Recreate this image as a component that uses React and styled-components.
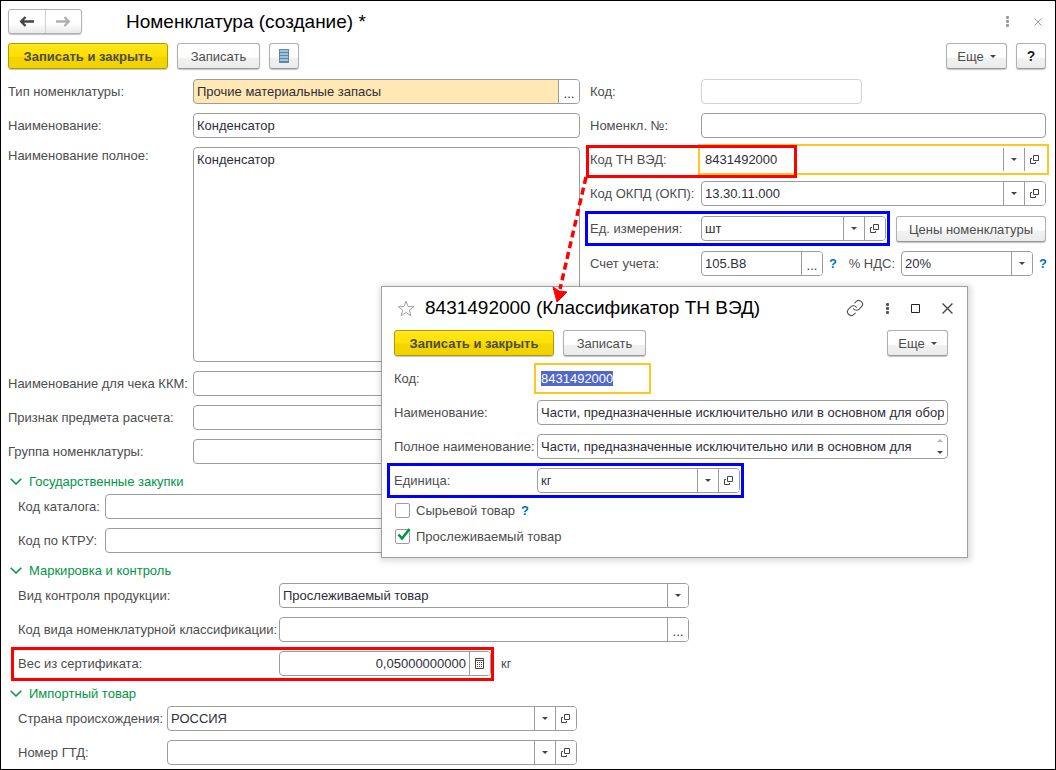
import React, { useEffect, useRef } from 'react';
import styled, { createGlobalStyle, css } from 'styled-components';
import { Link } from 'lucide-react';

const GlobalStyle = createGlobalStyle`
    * {
        box-sizing: border-box;
    }
    body {
        margin: 0;
        background: #fff;
        color: #4d4d4d;
        font-family: 'Liberation Sans', Arial, sans-serif;
        font-size: 13px;
        line-height: 15px;
    }
    button, input, textarea {
        font: inherit;
        color: inherit;
    }
`

/* icons */

const ArrowIcon = ({color, flip}) => (
    <svg width="16" height="13" viewBox="0 0 16 13">
        <path
            d="M2 6.500h13M6.500 2L2.200 6.500l4.300 4.500"
            fill="none"
            stroke={color}
            strokeWidth="2.400"
            transform={flip ? 'translate(16 0) scale(-1 1)' : undefined}
        />
    </svg>
)

const CaretIcon = () => (
    <svg width="6" height="3" viewBox="0 0 6 3"><path d="M0 0h6L3 3z" fill="#444" /></svg>
)

const OpenIcon = () => (
    <svg width="10" height="9" viewBox="0 0 10 9" fill="none" stroke="#444">
        <path d="M3.500 0.500h5v5h-5zM2 3.500H0.500v5h5V7" />
    </svg>
)

const CalcIcon = () => (
    <svg width="10" height="11" viewBox="0 0 10 11">
        <path d="M0.500 0.500h8v10h-8zM0.500 2.500h8" fill="none" stroke="#444" />
        <path d="M2 4h1v1H2zM4 4h1v1H4zM6 4h1v1H6zM2 6h1v1H2zM4 6h1v1H4zM6 6h1v1H6zM2 8h1v1H2zM4 8h1v1H4zM6 8h1v1H6z" fill="#444" />
    </svg>
)

const ListIcon = () => (
    <svg width="10" height="14" viewBox="0 0 10 14">
        <rect width="10" height="14" fill="#5b89ab" />
        <path d="M1 2h8M1 5h8M1 8h8M1 11h8" stroke="#b9d3e5" strokeWidth="1.600" />
    </svg>
)

const DotsIcon = ({color}) => (
    <svg width="3" height="11" viewBox="0 0 3 11" fill={color}>
        <rect width="3" height="3" rx="1" /><rect y="4" width="3" height="3" rx="1" /><rect y="8" width="3" height="3" rx="1" />
    </svg>
)

const CrossIcon = ({size, color}) => (
    <svg width={size} height={size} viewBox="0 0 10 10"><path d="M0.500 0.500l9 9M9.500 0.500l-9 9" stroke={color} strokeWidth="1.200" /></svg>
)

const SquareIcon = () => (
    <svg width="9" height="9" viewBox="0 0 9 9"><path d="M0.500 0.500h8v8h-8z" fill="none" stroke="#222" /></svg>
)

const StarIcon = () => (
    <svg width="18" height="17" viewBox="0 0 18 17">
        <path d="M9 1.200l2 5.300 5.800.2-4.500 3.500 1.600 5.500L9 12.500l-4.900 3.200 1.600-5.500L1.200 6.700 7 6.500z" fill="none" stroke="#a0a0a0" />
    </svg>
)

const ChevronIcon = () => (
    <svg width="12" height="7" viewBox="0 0 12 7"><path d="M0.700 0.700L6 6l5.300-5.300" fill="none" stroke="#009646" strokeWidth="1.500" /></svg>
)

/* controls */

const Button = styled.button`
    display: flex;
    align-items: center;
    justify-content: center;
    flex: none;
    height: 26px;
    width: ${p => p.$width}px;
    padding: 0;
    gap: 6px;
    border: 1px solid #b0b0b0;
    border-bottom-color: #999;
    border-radius: 3px;
    background: linear-gradient(#fff 0%, #fff 55%, #f1f1f1 60%, #ebebeb 100%);
    box-shadow: 0 1px 1px #c4c4c4;
    ${p => p.$primary && css`
        border-color: #b09a00;
        background: linear-gradient(#ffe61c 0%, #ffe000 50%, #f2d500 55%, #f0d200 100%);
        font-weight: bold;
    `}
    ${p => p.$strong && css`
        color: #222;
        font-size: 14px;
        font-weight: bold;
    `}
`

const Frame = styled.div`
    display: flex;
    flex: ${p => p.$width ? 'none' : '1'};
    width: ${p => p.$width ? p.$width + 'px' : 'auto'};
    min-width: 0;
    height: 25px;
    overflow: hidden;
    border: 1px solid ${p => p.$dim ? '#d2d2d2' : '#9c9c9c'};
    border-radius: 4px;
    background: ${p => p.$filled ? '#ffe8b3' : '#fff'};
    color: #2e2e3a;
    ${p => p.$focused && css`
        border-color: #fff;
        border-radius: 0;
        outline: 2px solid #fcc720;
        outline-offset: 1px;
    `}
`

const Input = styled.input`
    flex: 1;
    min-width: 0;
    padding: 0 3px;
    border: 0;
    outline: 0;
    background: transparent;
    text-align: ${p => p.$right ? 'right' : 'left'};
    &::selection {
        background: #5068c8;
        color: #fff;
    }
`

const CellButton = styled.button`
    display: flex;
    align-items: center;
    justify-content: center;
    flex: none;
    width: 21px;
    padding: 0;
    border: 0;
    border-left: 1px solid #9c9c9c;
    background: #fff;
    span {
        padding-top: 4px;
    }
`

const Area = styled.textarea`
    display: block;
    flex: 1;
    min-width: 0;
    height: ${p => p.$height}px;
    padding: 4px 3px;
    border: 1px solid #9c9c9c;
    border-radius: 4px;
    outline: 0;
    resize: none;
    color: #2e2e3a;
`

const LineArea = styled.textarea`
    flex: 1;
    min-width: 0;
    height: 23px;
    padding: 0 3px;
    border: 0;
    outline: 0;
    resize: none;
    overflow: hidden;
    background: transparent;
    line-height: 23px;
`

const Spin = styled.div`
    display: flex;
    flex-direction: column;
    align-items: center;
    justify-content: space-around;
    width: 15px;
    button {
        display: flex;
        padding: 0;
        border: 0;
        background: none;
    }
    button:first-child {
        opacity: 0.4;
        transform: rotate(180deg);
    }
`

const Row = styled.div`
    display: flex;
    align-items: ${p => p.$align || 'center'};
    gap: ${p => p.$gap || 0}px;
`

const Label = styled.label`
    flex: none;
    width: ${p => p.$width ? p.$width + 'px' : 'auto'};
    padding-top: ${p => p.$top || 0}px;
    align-self: ${p => p.$top ? 'flex-start' : 'center'};
    white-space: nowrap;
`

const Help = styled.button`
    flex: none;
    width: 7px;
    padding: 0;
    border: 0;
    background: none;
    color: #0070ba;
    font-weight: bold;
`

/* coloured frame drawn over a row */
const Mark = styled.div`
    position: relative;
    display: flex;
    align-items: center;
    &::after {
        content: '';
        position: absolute;
        inset: ${p => p.$inset};
        border: 3px solid ${p => p.$color};
        pointer-events: none;
    }
`

const Field = ({id, value = '', width, cells = [], right, inputRef, ...look}) => (
    <Frame $width={width} $filled={look.filled} $dim={look.dim} $focused={look.focused}>
        <Input id={id} defaultValue={value} $right={right} ref={inputRef} />
        {cells.map(cell => (
            <CellButton key={cell} type="button" aria-label={cell}>
                {cell === 'list' && <CaretIcon />}
                {cell === 'open' && <OpenIcon />}
                {cell === 'calc' && <CalcIcon />}
                {cell === 'more' && <span>...</span>}
            </CellButton>
        ))}
    </Frame>
)

/* page parts */

const Page = styled.div`
    position: relative;
    min-height: 100vh;
    padding: 8px 9px 4px 7px;
    border: 1px solid #000;
    background: #fff;
`

const Header = styled.header`
    display: flex;
    align-items: center;
    height: 25px;
    padding-right: 4px;
`

const Nav = styled.div`
    display: flex;
    width: 74px;
    height: 25px;
    margin-right: 44px;
    border: 1px solid #b0b0b0;
    border-radius: 3px;
    background: linear-gradient(#fff 55%, #eaeaea 100%);
    box-shadow: 0 1px 1px #c4c4c4;
    button {
        display: flex;
        flex: 1;
        align-items: center;
        justify-content: center;
        padding: 0;
        border: 0;
        background: none;
    }
    button + button {
        border-left: 1px solid #d0d0d0;
    }
`

const Title = styled.h1`
    flex: 1;
    margin: 0;
    color: #000;
    font-size: 19px;
    font-weight: normal;
    line-height: 24px;
    white-space: nowrap;
`

const WindowButtons = styled.div`
    display: flex;
    align-items: center;
    gap: ${p => p.$gap}px;
    button {
        display: flex;
        padding: 0;
        border: 0;
        background: none;
    }
`

const Toolbar = styled.div`
    display: flex;
    gap: 9px;
    margin-top: 9px;
`

const Spacer = styled.div`
    flex: 1;
`

const Columns = styled.div`
    display: grid;
    grid-template-columns: 572fr 456fr;
    column-gap: 10px;
    margin-top: 10px;
`

const Stack = styled.div`
    display: flex;
    flex-direction: column;
    gap: 9px;
    padding-left: ${p => p.$indent || 0}px;
`

const UnitRows = styled(Stack)`
    padding-top: 1px;
`

const Group = styled.section`
    h2 {
        display: flex;
        align-items: center;
        gap: 7px;
        height: 30px;
        margin: 0;
        padding: 4px 0 0 2px;
        color: #009646;
        font-size: 13px;
        font-weight: normal;
    }
`

const Dialog = styled.section`
    position: absolute;
    left: 380px;
    top: 285px;
    width: 587px;
    padding: 8px 19px 12px 12px;
    border: 1px solid #a0a0a0;
    background: #fff;
    box-shadow: 1px 1px 6px 2px rgba(0, 0, 0, 0.15);
`

const DialogHeader = styled.header`
    display: flex;
    align-items: center;
    gap: 10px;
    height: 26px;
    margin-right: -5px;
    padding-left: 3px;
`

const DialogBody = styled.div`
    display: flex;
    flex-direction: column;
    gap: 9px;
    margin-top: 10px;
`

const CheckRow = styled.div`
    display: flex;
    align-items: center;
    gap: 6px;
    height: 17px;
    padding-left: 1px;
`

const CheckBox = styled.span`
    position: relative;
    display: flex;
    input {
        width: 15px;
        height: 15px;
        margin: 0;
        appearance: none;
        border: 1px solid #9c9c9c;
        border-radius: 2px;
        background: #fff;
    }
    svg {
        position: absolute;
        left: 2px;
        top: -1px;
        pointer-events: none;
    }
    input:not(:checked) + svg {
        display: none;
    }
`

const Pointer = styled.svg`
    position: absolute;
    left: 543px;
    top: 174px;
    pointer-events: none;
`

const Check = ({id, label, checked, help}) => (
    <CheckRow>
        <CheckBox>
            <input type="checkbox" id={id} defaultChecked={checked} />
            <svg width="14" height="13" viewBox="0 0 14 13">
                <path d="M1.500 6.500L5 10.500 12.500 1" fill="none" stroke="#009646" strokeWidth="2.600" />
            </svg>
        </CheckBox>
        <Label htmlFor={id}>{label}</Label>
        {help && <Help type="button">?</Help>}
    </CheckRow>
)

const CodeDialog = () => {
    const codeRef = useRef(null)
    useEffect(() => {
        codeRef.current.focus()
        codeRef.current.select()
    }, [])
    return (
        <Dialog role="dialog" aria-label="Классификатор ТН ВЭД">
            <DialogHeader>
                <StarIcon />
                <Title as="h2">8431492000 (Классификатор ТН ВЭД)</Title>
                <WindowButtons $gap={22}>
                    <button type="button" aria-label="Ссылка"><Link size={18} color="#555" strokeWidth={1.5} /></button>
                    <button type="button" aria-label="Меню"><DotsIcon color="#555" /></button>
                    <button type="button" aria-label="Развернуть"><SquareIcon /></button>
                    <button type="button" aria-label="Закрыть"><CrossIcon size="11" color="#444" /></button>
                </WindowButtons>
            </DialogHeader>
            <Toolbar>
                <Button $primary $width={160}>Записать и закрыть</Button>
                <Button $width={83}>Записать</Button>
                <Spacer />
                <Button $width={61}>Еще <CaretIcon /></Button>
            </Toolbar>
            <DialogBody>
                <Row>
                    <Label $width={143} htmlFor="d-code">Код:</Label>
                    <Field id="d-code" value="8431492000" width={111} focused inputRef={codeRef} />
                </Row>
                <Row>
                    <Label $width={143} htmlFor="d-name">Наименование:</Label>
                    <Field id="d-name" value="Части, предназначенные исключительно или в основном для оборудования" />
                </Row>
                <Row>
                    <Label $width={143} htmlFor="d-full">Полное наименование:</Label>
                    <Frame>
                        <LineArea id="d-full" rows="1" defaultValue="Части, предназначенные исключительно или в основном для оборудования" />
                        <Spin>
                            <button type="button" aria-label="Вверх"><CaretIcon /></button>
                            <button type="button" aria-label="Вниз"><CaretIcon /></button>
                        </Spin>
                    </Frame>
                </Row>
                <Row>
                    <Mark $color="#0000fe" $inset="-5px -4px -5px -7px">
                        <Label $width={143} htmlFor="d-unit">Единица:</Label>
                        <Field id="d-unit" value="кг" width={203} cells={['list', 'open']} />
                    </Mark>
                </Row>
                <Check id="d-raw" label="Сырьевой товар" help />
                <Check id="d-trace" label="Прослеживаемый товар" checked />
            </DialogBody>
        </Dialog>
    )
}

const App = () => (
    <>
        <GlobalStyle />
        <Page>
            <Header>
                <Nav>
                    <button type="button" aria-label="Назад"><ArrowIcon color="#444" /></button>
                    <button type="button" aria-label="Вперед"><ArrowIcon color="#b0b0b0" flip /></button>
                </Nav>
                <Title>Номенклатура (создание) *</Title>
                <WindowButtons $gap={25}>
                    <button type="button" aria-label="Меню"><DotsIcon color="#999" /></button>
                    <button type="button" aria-label="Закрыть"><CrossIcon size="8" color="#999" /></button>
                </WindowButtons>
            </Header>
            <Toolbar>
                <Button $primary $width={160}>Записать и закрыть</Button>
                <Button $width={83}>Записать</Button>
                <Button $width={30} aria-label="Список"><ListIcon /></Button>
                <Spacer />
                <Button $width={61}>Еще <CaretIcon /></Button>
                <Button $width={30} $strong>?</Button>
            </Toolbar>
            <Columns>
                <Stack>
                    <Row>
                        <Label $width={185} htmlFor="type">Тип номенклатуры:</Label>
                        <Field id="type" value="Прочие материальные запасы" filled cells={['more']} />
                    </Row>
                    <Row>
                        <Label $width={185} htmlFor="name">Наименование:</Label>
                        <Field id="name" value="Конденсатор" />
                    </Row>
                    <Row>
                        <Label $width={185} $top={1} htmlFor="full">Наименование полное:</Label>
                        <Area id="full" $height={215} defaultValue="Конденсатор" />
                    </Row>
                    <Row>
                        <Label $width={185} htmlFor="kkm">Наименование для чека ККМ:</Label>
                        <Field id="kkm" />
                    </Row>
                    <Row>
                        <Label $width={185} htmlFor="sign">Признак предмета расчета:</Label>
                        <Field id="sign" />
                    </Row>
                    <Row>
                        <Label $width={185} htmlFor="group">Группа номенклатуры:</Label>
                        <Field id="group" />
                    </Row>
                </Stack>
                <Stack>
                    <Row>
                        <Label $width={111} htmlFor="code">Код:</Label>
                        <Field id="code" width={161} dim />
                    </Row>
                    <Row>
                        <Label $width={111} htmlFor="num">Номенкл. №:</Label>
                        <Field id="num" />
                    </Row>
                    <Mark $color="#fe0000" $inset="-2px 249px -6px -4px">
                        <Label $width={111} htmlFor="tnved">Код ТН ВЭД:</Label>
                        <Field id="tnved" value="8431492000" focused cells={['list', 'open']} />
                    </Mark>
                    <Row>
                        <Label $width={111} htmlFor="okpd">Код ОКПД (ОКП):</Label>
                        <Field id="okpd" value="13.30.11.000" cells={['list', 'open']} />
                    </Row>
                    <UnitRows>
                        <Row $gap={10} $align="flex-start">
                            <Mark $color="#0000fe" $inset="-5px -4px -5px -5px">
                                <Label $width={111} htmlFor="unit">Ед. измерения:</Label>
                                <Field id="unit" value="шт" width={185} cells={['list', 'open']} />
                            </Mark>
                            <Button $width={150}>Цены номенклатуры</Button>
                        </Row>
                        <Row $gap={6}>
                            <Row>
                                <Label $width={111} htmlFor="account">Счет учета:</Label>
                                <Field id="account" value="105.В8" width={122} cells={['more']} />
                            </Row>
                            <Help type="button">?</Help>
                            <Spacer />
                            <Label htmlFor="vat">% НДС:</Label>
                            <Field id="vat" value="20%" width={132} cells={['list']} />
                            <Help type="button">?</Help>
                        </Row>
                    </UnitRows>
                </Stack>
            </Columns>
            <Group>
                <h2><ChevronIcon />Государственные закупки</h2>
                <Stack $indent={10}>
                    <Row>
                        <Label $width={87} htmlFor="catalog">Код каталога:</Label>
                        <Field id="catalog" width={475} />
                    </Row>
                    <Row>
                        <Label $width={87} htmlFor="ktru">Код по КТРУ:</Label>
                        <Field id="ktru" width={475} />
                    </Row>
                </Stack>
            </Group>
            <Group>
                <h2><ChevronIcon />Маркировка и контроль</h2>
                <Stack $indent={10}>
                    <Row>
                        <Label $width={261} htmlFor="control">Вид контроля продукции:</Label>
                        <Field id="control" value="Прослеживаемый товар" width={410} cells={['list']} />
                    </Row>
                    <Row>
                        <Label $width={261} htmlFor="class">Код вида номенклатурной классификации:</Label>
                        <Field id="class" width={410} cells={['more']} />
                    </Row>
                    <Row $gap={10}>
                        <Mark $color="#fe0000" $inset="-4px -3px -5px -7px">
                            <Label $width={261} htmlFor="weight">Вес из сертификата:</Label>
                            <Field id="weight" value="0,05000000000" width={212} right cells={['calc']} />
                        </Mark>
                        <span>кг</span>
                    </Row>
                </Stack>
            </Group>
            <Group>
                <h2><ChevronIcon />Импортный товар</h2>
                <Stack $indent={10}>
                    <Row>
                        <Label $width={149} htmlFor="country">Страна происхождения:</Label>
                        <Field id="country" value="РОССИЯ" width={410} cells={['list', 'open']} />
                    </Row>
                    <Row>
                        <Label $width={149} htmlFor="gtd">Номер ГТД:</Label>
                        <Field id="gtd" width={410} cells={['list', 'open']} />
                    </Row>
                </Stack>
            </Group>
            <CodeDialog />
            <Pointer width="50" height="130" viewBox="0 0 50 130">
                <path d="M42 2L16 114" stroke="#fe0000" strokeWidth="3.500" strokeDasharray="7 4" />
                <path d="M9 112l6 4 8 1-10 10z" fill="#fe0000" stroke="#fe0000" />
            </Pointer>
        </Page>
    </>
)

export default App
